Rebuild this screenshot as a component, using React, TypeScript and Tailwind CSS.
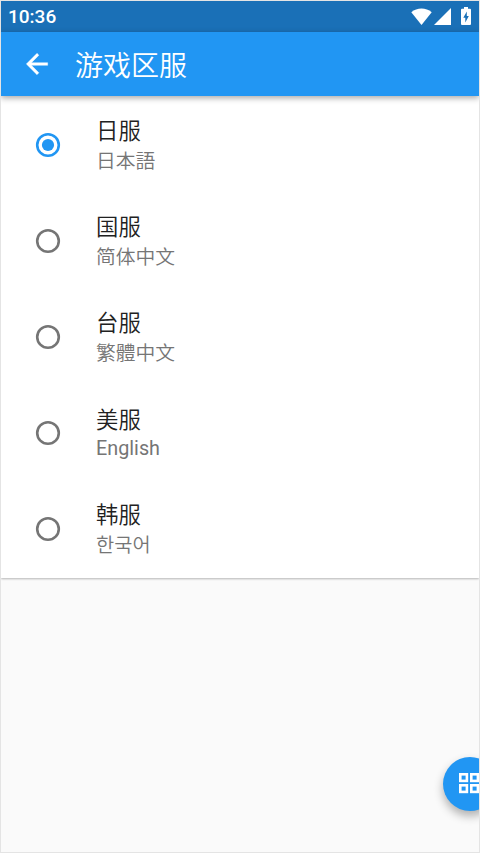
import { useState } from 'react';

interface Region {
  id: string;
  name: string;
  language: string;
  lang: string;
  nameClass?: string;
  languageClass?: string;
}

const REGIONS: Region[] = [
  { id: 'jp', name: '日服', language: '日本語', lang: 'ja' },
  { id: 'cn', name: '国服', language: '简体中文', lang: 'zh-CN' },
  { id: 'tw', name: '台服', language: '繁體中文', lang: 'zh-TW' },
  {
    id: 'us',
    name: '美服',
    language: 'English',
    lang: 'en',
    nameClass: 'pt-px',
    languageClass: 'font-normal leading-[28px]',
  },
  { id: 'kr', name: '韩服', language: '한국어', lang: 'ko' },
];

export default function App() {
  const [selected, setSelected] = useState('jp');

  return (
    <div className="relative flex h-[853px] w-[480px] flex-col overflow-hidden border border-[#e4e4e4] bg-[#fafafa] font-[Roboto,'Noto_Sans_CJK_SC',sans-serif]">
      <StatusBar />

      {/* App bar */}
      <header className="z-10 flex h-16 shrink-0 items-center bg-[#2196f3] pl-5 text-white shadow-[0_2px_6px_rgba(0,0,0,0.35)]">
        <button aria-label="Back">
          <BackIcon />
        </button>
        <h1 className="ml-[22px] pt-1.5 text-[28px] leading-8 font-[350]">游戏区服</h1>
      </header>

      {/* Region list */}
      <main className="shrink-0 bg-white py-px shadow-[0_1px_2px_rgba(0,0,0,0.28)]" role="radiogroup">
        {REGIONS.map((region) => (
          <button
            key={region.id}
            role="radio"
            aria-checked={selected === region.id}
            onClick={() => setSelected(region.id)}
            className="flex h-24 w-full items-center pl-[33px] text-left"
          >
            <RadioIcon checked={selected === region.id} />
            <span className="ml-[34px] flex h-16 flex-col pt-[3px]">
              <span className={`h-[31px] text-[22.4px] leading-[30px] font-[350] text-[#212121] ${region.nameClass ?? ''}`}>
                {region.name}
              </span>
              <span
                lang={region.lang}
                className={`text-[19.8px] text-[#757575] ${region.languageClass ?? 'font-[350] leading-[30px]'}`}
              >
                {region.language}
              </span>
            </span>
          </button>
        ))}
      </main>

      {/* Floating button, partly off screen */}
      <button
        aria-label="Apps"
        className="absolute top-[756px] left-[442px] flex size-[54px] items-center justify-center rounded-full bg-[#2196f3] text-white shadow-[0_5px_10px_rgba(0,0,0,0.3)]"
      >
        <GridIcon />
      </button>
    </div>
  );
}

function StatusBar() {
  return (
    <div className="flex h-[31px] shrink-0 items-center bg-[#1a70b7] pr-2 pl-[7px] text-white">
      <span className="text-[19px] leading-[31px] font-medium">10:36</span>
      <div className="ml-auto flex items-center pb-px">
        <svg className="h-[17px] w-[21px]" viewBox="0 0 21 17" fill="currentColor">
          <path d="M.3 4.2C6 -.6 15 -.6 20.7 4.2L10.5 17z" />
        </svg>
        <svg className="ml-0.5 size-[17px]" viewBox="0 0 17 17" fill="currentColor">
          <path d="M17 0v17H0z" />
        </svg>
        <svg className="ml-[10px] h-[18px] w-[10px]" viewBox="0 0 10 18">
          <path d="M3 0h4v1.8h2q1 0 1 1V17q0 1-1 1H1q-1 0-1-1V2.8q0-1 1-1h2z" fill="currentColor" />
          <path d="M5.8 4.5L2.3 10.7h2v4.8l3.5-6.6h-2z" fill="#1a70b7" />
        </svg>
      </div>
    </div>
  );
}

function BackIcon() {
  return (
    <svg className="size-8" viewBox="0 0 24 24" fill="currentColor" stroke="currentColor" strokeWidth="0.3">
      <path d="M20 11H7.83l5.59-5.59L12 4l-8 8 8 8 1.41-1.41L7.83 13H20v-2z" />
    </svg>
  );
}

function RadioIcon({ checked }: { checked: boolean }) {
  return (
    <svg className={`size-7 ${checked ? 'text-[#2196f3]' : 'text-[#757575]'}`} viewBox="0 0 28 28" fill="none">
      <circle cx="14" cy="14" r="10.8" stroke="currentColor" strokeWidth="2.6" />
      {checked && <circle cx="14" cy="14" r="6.1" fill="currentColor" />}
    </svg>
  );
}

function GridIcon() {
  return (
    <svg className="size-[22px]" viewBox="0 0 22 22" fill="none" stroke="currentColor" strokeWidth="2.6">
      <rect x="1.3" y="1.3" width="6.6" height="6.6" />
      <rect x="12.3" y="1.3" width="6.6" height="6.6" />
      <rect x="1.3" y="12.3" width="6.6" height="6.6" />
      <rect x="12.3" y="12.3" width="6.6" height="6.6" />
    </svg>
  );
}
